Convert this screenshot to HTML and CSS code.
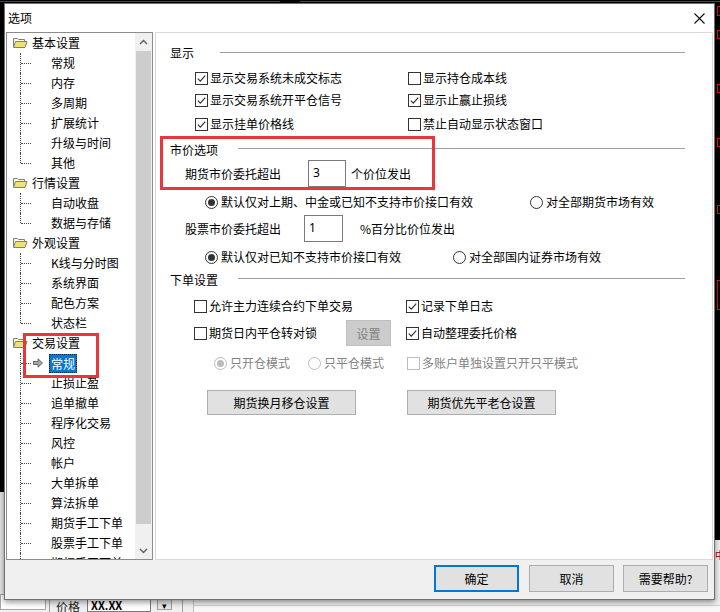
FILE: index.html
```html
<!DOCTYPE html>
<html lang="zh-CN">
<head>
<meta charset="utf-8">
<title>选项</title>
<link rel="stylesheet" href="styles.css">
</head>
<body>
<div class="desk">
  <div class="chart-top"></div>
  <div class="chart-left-low"></div>
  <div class="chart-right">
    <span class="rm rm1"></span><span class="rm rm2"></span><span class="rm rm3"></span><span class="rm rm4"></span><span class="rm rm5"></span><span class="rm rm6"></span>
  </div>
  <div class="chart-right-low">中</div>
  <div class="appbar">
    <span class="ab-combo"><span class="ab-chev">˅</span></span>
    <span class="ab-sep"></span>
    <span class="ab-label">价格</span>
    <span class="ab-input">XX.XX</span>
    <span class="ab-drop">▾</span>
    <span class="ab-sep2"></span>
    <span class="ab-grid"></span>
  </div>
</div>

<div class="dialog">
  <div class="titlebar">
    <span class="title">选项</span>
    <svg class="close" viewBox="0 0 11 11" width="11" height="11"><path d="M0.5 0.5 L10.5 10.5 M10.5 0.5 L0.5 10.5" stroke="#111" stroke-width="1.1" fill="none"/></svg>
  </div>

  <div class="main">
    <div class="tree">
      <div class="tree-list">
        <div class="group">
          <div class="root"><svg class="folder" viewBox="0 0 16 12" width="16" height="12"><path d="M1.5 9.5 V1.5 H5.5 L6.5 2.5 H12.5 V4.5" fill="#fffbe0" stroke="#7d7d7d"/><path d="M1.5 10.5 L3.5 4.5 H15 L13 10.5 Z" fill="#f2df78" stroke="#7d7d7d"/></svg>基本设置</div>
          <ul class="kids">
            <li>常规</li><li>内存</li><li>多周期</li><li>扩展统计</li><li>升级与时间</li><li>其他</li>
          </ul>
        </div>
        <div class="group">
          <div class="root"><svg class="folder" viewBox="0 0 16 12" width="16" height="12"><path d="M1.5 9.5 V1.5 H5.5 L6.5 2.5 H12.5 V4.5" fill="#fffbe0" stroke="#7d7d7d"/><path d="M1.5 10.5 L3.5 4.5 H15 L13 10.5 Z" fill="#f2df78" stroke="#7d7d7d"/></svg>行情设置</div>
          <ul class="kids">
            <li>自动收盘</li><li>数据与存储</li>
          </ul>
        </div>
        <div class="group">
          <div class="root"><svg class="folder" viewBox="0 0 16 12" width="16" height="12"><path d="M1.5 9.5 V1.5 H5.5 L6.5 2.5 H12.5 V4.5" fill="#fffbe0" stroke="#7d7d7d"/><path d="M1.5 10.5 L3.5 4.5 H15 L13 10.5 Z" fill="#f2df78" stroke="#7d7d7d"/></svg>外观设置</div>
          <ul class="kids">
            <li>K线与分时图</li><li>系统界面</li><li>配色方案</li><li>状态栏</li>
          </ul>
        </div>
        <div class="group">
          <div class="root"><svg class="folder" viewBox="0 0 16 12" width="16" height="12"><path d="M1.5 9.5 V1.5 H5.5 L6.5 2.5 H12.5 V4.5" fill="#fffbe0" stroke="#7d7d7d"/><path d="M1.5 10.5 L3.5 4.5 H15 L13 10.5 Z" fill="#f2df78" stroke="#7d7d7d"/></svg>交易设置</div>
          <ul class="kids">
            <li class="sel"><svg class="arrow" viewBox="0 0 10 10" width="10" height="10"><path d="M0.5 3.5 H5 V0.8 L9.5 5 L5 9.2 V6.5 H0.5 Z" fill="#a8a8a8" stroke="#5a5a5a" stroke-width="0.9"/></svg><span class="hl">常规</span></li>
            <li>止损止盈</li><li>追单撤单</li><li>程序化交易</li><li>风控</li><li>帐户</li><li>大单拆单</li><li>算法拆单</li><li>期货手工下单</li><li>股票手工下单</li><li>期权手工下单</li>
          </ul>
        </div>
      </div>
      <div class="scroll">
        <div class="sb-btn"><svg viewBox="0 0 9 6" width="9" height="6"><path d="M1 5 L4.5 1.5 L8 5" fill="none" stroke="#606060" stroke-width="1.4"/></svg></div>
        <div class="thumb"></div>
        <div class="sb-btn sb-down"><svg viewBox="0 0 9 6" width="9" height="6"><path d="M1 1 L4.5 4.5 L8 1" fill="none" stroke="#606060" stroke-width="1.4"/></svg></div>
      </div>
    </div>

    <div class="content">
      <div class="hdr"><span>显示</span><span class="line line-wide"></span></div>

      <div class="row2 mt5">
        <label class="cb c1"><span class="box"><svg viewBox="0 0 11 11"><path d="M1.8 5.6 L4.3 8.1 L9.2 2.6" fill="none" stroke="#333" stroke-width="1.2"/></svg></span>显示交易系统未成交标志</label>
        <label class="cb"><span class="box"></span>显示持仓成本线</label>
      </div>
      <div class="row2 mt2">
        <label class="cb c1"><span class="box"><svg viewBox="0 0 11 11"><path d="M1.8 5.6 L4.3 8.1 L9.2 2.6" fill="none" stroke="#333" stroke-width="1.2"/></svg></span>显示交易系统开平仓信号</label>
        <label class="cb"><span class="box"><svg viewBox="0 0 11 11"><path d="M1.8 5.6 L4.3 8.1 L9.2 2.6" fill="none" stroke="#333" stroke-width="1.2"/></svg></span>显示止赢止损线</label>
      </div>
      <div class="row2 mt4">
        <label class="cb c1"><span class="box"><svg viewBox="0 0 11 11"><path d="M1.8 5.6 L4.3 8.1 L9.2 2.6" fill="none" stroke="#333" stroke-width="1.2"/></svg></span>显示挂单价格线</label>
        <label class="cb"><span class="box"></span>禁止自动显示状态窗口</label>
      </div>

      <div class="hdr mt6"><span>市价选项</span><span class="line"></span></div>

      <div class="field fut">
        <span class="flabel fl-fut">期货市价委托超出</span>
        <span class="edit e-fut">3</span>
        <span class="fsuffix">个价位发出</span>
      </div>
      <div class="radios mt5">
        <label class="rb rb-w1"><span class="radio on"></span>默认仅对上期、中金或已知不支持市价接口有效</label>
        <label class="rb"><span class="radio"></span>对全部期货市场有效</label>
      </div>
      <div class="field mt3">
        <span class="flabel fl-stk">股票市价委托超出</span>
        <span class="edit e-stk">1</span>
        <span class="fsuffix fs-stk">%百分比价位发出</span>
      </div>
      <div class="radios mt5">
        <label class="rb rb-w2"><span class="radio on"></span>默认仅对已知不支持市价接口有效</label>
        <label class="rb"><span class="radio"></span>对全部国内证券市场有效</label>
      </div>

      <div class="hdr mt3"><span>下单设置</span><span class="line"></span></div>

      <div class="row3 mt6">
        <label class="cb c3"><span class="box"></span>允许主力连续合约下单交易</label>
        <label class="cb"><span class="box"><svg viewBox="0 0 11 11"><path d="M1.8 5.6 L4.3 8.1 L9.2 2.6" fill="none" stroke="#333" stroke-width="1.2"/></svg></span>记录下单日志</label>
      </div>
      <div class="row3 rb-tall mt4">
        <div class="c3 c3-split">
          <label class="cb"><span class="box"></span>期货日内平仓转对锁</label>
          <span class="btn-dis">设置</span>
        </div>
        <label class="cb"><span class="box"><svg viewBox="0 0 11 11"><path d="M1.8 5.6 L4.3 8.1 L9.2 2.6" fill="none" stroke="#333" stroke-width="1.2"/></svg></span>自动整理委托价格</label>
      </div>
      <div class="row-dis mt7">
        <label class="rb dis d1"><span class="radio on"></span>只开仓模式</label>
        <label class="rb dis d2"><span class="radio"></span>只平仓模式</label>
        <label class="cb dis"><span class="box"></span>多账户单独设置只开只平模式</label>
      </div>

      <div class="btnrow mt17">
        <span class="btn wide">期货换月移仓设置</span>
        <span class="btn wide">期货优先平老仓设置</span>
      </div>
    </div>
  </div>

  <div class="footer">
    <span class="btn fbtn ok">确定</span>
    <span class="btn fbtn cancel">取消</span>
    <span class="btn fbtn">需要帮助?</span>
  </div>
</div>

<div class="mark mark-tree"></div>
<div class="mark mark-price"></div>
</body>
</html>
```

FILE: styles.css
```css
* { box-sizing: border-box; margin: 0; padding: 0; }
html, body { width: 720px; height: 612px; overflow: hidden; }
body {
  background: #000;
  font-family: "Noto Sans CJK SC", "Microsoft YaHei", "Noto Sans", sans-serif;
  font-size: 12px;
  color: #000;
  position: relative;
}

/* ---------- background application (behind the dialog) ---------- */
.desk { position: absolute; inset: 0; }
.chart-top {
  position: absolute; left: 0; top: 1px; width: 720px; height: 1px;
  background: linear-gradient(90deg, #d01010 0 280px, #000 280px 300px, #d01010 300px 720px);
}
.chart-left-low { position: absolute; left: 0; top: 492px; width: 5px; height: 120px; background: #e6e6e6; }
.chart-right { position: absolute; left: 715px; top: 0; width: 5px; height: 540px; }
.rm { position: absolute; left: 2px; width: 3px; border: 1px solid #e01010; border-right: 0; }
.rm1 { top: 6px; height: 10px; }
.rm2 { top: 30px; height: 9px; }
.rm3 { top: 84px; height: 9px; }
.rm4 { top: 138px; height: 9px; }
.rm5 { top: 205px; height: 9px; }
.rm6 { top: 280px; height: 30px; }
.chart-right-low { position: absolute; left: 715px; top: 540px; width: 5px; height: 72px; background: #f2f2f2; color: #900; font-size: 10px; line-height: 30px; overflow: hidden; }
.appbar {
  position: absolute; left: 0; top: 594px; width: 720px; height: 18px;
  background: #f0f0f0; display: flex; align-items: flex-start;
}
.ab-combo { width: 46px; height: 16px; border: 1px solid #a8a8a8; background: #fff; position: relative; }
.ab-chev { position: absolute; right: 4px; top: 1px; font-size: 10px; color: #555; line-height: 12px; }
.ab-sep { width: 1px; height: 18px; background: #a0a0a0; margin-left: 3px; }
.ab-label { margin-left: 6px; line-height: 26px; font-size: 12px; color: #222; }
.ab-input { margin-left: 7px; width: 64px; height: 18px; border: 1px solid #7a7a7a; background: #fff; font-weight: bold; font-size: 11px; padding-left: 3px; line-height: 20px; }
.ab-drop { margin-left: 6px; width: 15px; height: 16px; border: 1px solid #a0a0a0; background: #e6e6e6; font-size: 9px; text-align: center; line-height: 22px; }
.ab-sep2 { width: 1px; height: 18px; background: #a0a0a0; margin-left: 10px; }
.ab-grid { margin-left: 10px; flex: 1; height: 18px; border-left: 1px solid #c0c0c0; background: linear-gradient(#f0f0f0 0 11px, #d0d0d0 11px 12px, #f8f8f8 12px); }

/* ---------- dialog window ---------- */
.dialog {
  position: absolute; left: 4px; top: 3px; width: 711px; height: 597px;
  background: #fff; border: 1px solid #707070;
  box-shadow: 0 2px 6px rgba(0,0,0,0.45);
  display: flex; flex-direction: column;
}
.titlebar {
  height: 28px; display: flex; align-items: center; justify-content: space-between;
  padding: 0 9px 0 3px;
}
.title { font-size: 12px; line-height: 16px; }
.close { display: block; }

.main { height: 528px; display: flex; padding-left: 1px; gap: 2px; }

/* ---------- tree ---------- */
.tree {
  width: 147px; height: 528px; border: 1px solid #8c8c8c;
  display: flex; background: #fff;
}
.tree-list { flex: 1; overflow: hidden; }
.root {
  height: 20px; display: flex; align-items: center; padding-left: 5px;
  line-height: 20px; white-space: nowrap;
}
.folder { margin-right: 4px; flex: none; }
.kids { list-style: none; }
.kids li {
  position: relative; height: 20px; line-height: 20px; padding-left: 44px; white-space: nowrap;
}
.kids li::before {
  content: ""; position: absolute; left: 13px; top: 0; bottom: 0;
  border-left: 1px dotted #444;
}
.kids li:last-child::before { bottom: 10px; }
.kids li::after {
  content: ""; position: absolute; left: 14px; top: 10px; width: 10px;
  border-top: 1px dotted #444;
}
.kids li.sel { padding-left: 26px; display: flex; align-items: center; }
.arrow { flex: none; margin-right: 6px; position: relative; z-index: 1; }
.hl {
  display: block; height: 19px; line-height: 19px; padding: 0 2px;
  background: #0078d7; color: #fff; outline: 1px dotted #222; outline-offset: -1px;
}

.scroll {
  width: 17px; background: #f0f0f0; display: flex; flex-direction: column; align-items: center;
}
.sb-btn { width: 17px; height: 17px; display: flex; align-items: center; justify-content: center; flex: none; }
.sb-down { margin-top: auto; }
.thumb { width: 15px; height: 473px; background: #cdcdcd; margin-top: 1px; flex: none; }

/* ---------- content pane ---------- */
.content {
  width: 558px; height: 528px; border: 1px solid #dadada; background: #fff;
  padding-top: 10px; display: flex; flex-direction: column;
}
.mt2 { margin-top: 2px; }
.mt3 { margin-top: 3px; }
.mt4 { margin-top: 4px; }
.mt5 { margin-top: 5px; }
.mt6 { margin-top: 6px; }
.mt7 { margin-top: 7px; }
.mt17 { margin-top: 17px; }

.hdr {
  height: 20px; display: flex; align-items: center; padding: 0 27px 0 14px;
  line-height: 20px; flex: none;
}
.hdr .line { flex: 1; height: 1px; background: #a0a0a0; margin-left: 20px; margin-top: -3px; }
.hdr .line-wide { margin-left: 26px; margin-top: -1px; }

.cb, .rb { display: flex; align-items: center; white-space: nowrap; line-height: 20px; }
.box {
  width: 13px; height: 13px; border: 1px solid #333; background: #fff;
  margin-right: 2px; flex: none; display: flex;
}
.box svg { width: 11px; height: 11px; display: block; }
.radio {
  width: 13px; height: 13px; border: 1px solid #333; border-radius: 50%; background: #fff;
  margin-right: 3px; flex: none; display: flex; align-items: center; justify-content: center;
}
.radio.on::after { content: ""; width: 7px; height: 7px; border-radius: 50%; background: #333; }

.row2 { height: 20px; display: flex; align-items: center; padding-left: 39px; flex: none; }
.c1 { width: 213px; }

.field { height: 27px; display: flex; align-items: center; padding-left: 29px; flex: none; }
.fl-fut { width: 123px; }
.fl-stk { width: 119px; }
.edit {
  height: 27px; border: 1px solid #7a7a7a; background: #fff;
  padding: 4px 0 0 4px; line-height: 16px; align-self: stretch; font-family: "Noto Sans", sans-serif;
}
.e-fut { width: 38px; }
.e-stk { width: 39px; }
.fsuffix { margin-left: 5px; }
.fs-stk { margin-left: 17px; }

.radios { height: 20px; display: flex; align-items: center; padding-left: 49px; flex: none; }
.rb-w1 { width: 325px; }
.rb-w2 { width: 248px; }

.row3 { height: 20px; display: flex; align-items: center; padding-left: 38px; flex: none; }
.rb-tall { height: 26px; }
.c3 { width: 212px; }
.c3-split { display: flex; align-items: center; justify-content: space-between; padding-right: 15px; align-self: stretch; }
.btn-dis {
  width: 45px; height: 26px; background: #cccccc; border: 1px solid #bfbfbf; color: #838383;
  display: flex; align-items: center; justify-content: center;
}

.row-dis { height: 20px; display: flex; align-items: center; padding-left: 58px; flex: none; }
.dis { color: #838383; }
.dis .radio, .dis .box { border-color: #bcbcbc; }
.dis .radio.on::after { background: #bcbcbc; }
.d1 { width: 94px; }
.d2 { width: 99px; }
.dis .box { margin-right: 2px; }

.btnrow { height: 25px; display: flex; padding-left: 51px; gap: 51px; flex: none; }
.btn {
  background: #e1e1e1; border: 1px solid #adadad;
  display: flex; align-items: center; justify-content: center; white-space: nowrap;
}
.wide { width: 149px; height: 25px; }

/* ---------- footer ---------- */
.footer {
  height: 39px; background: #f0f0f0; display: flex; justify-content: flex-end;
  align-items: flex-start; padding: 5px 6px 0 0;
}
.fbtn { width: 85px; height: 27px; }
.ok { border: 2px solid #0078d7; margin-right: 10px; }
.cancel { margin-right: 9px; }

/* ---------- annotation marks ---------- */
.mark { position: absolute; border: 3px solid #e9363b; }
.mark-tree { left: 23px; top: 333px; width: 76px; height: 45px; }
.mark-price { left: 160px; top: 136px; width: 275px; height: 54px; }
```
